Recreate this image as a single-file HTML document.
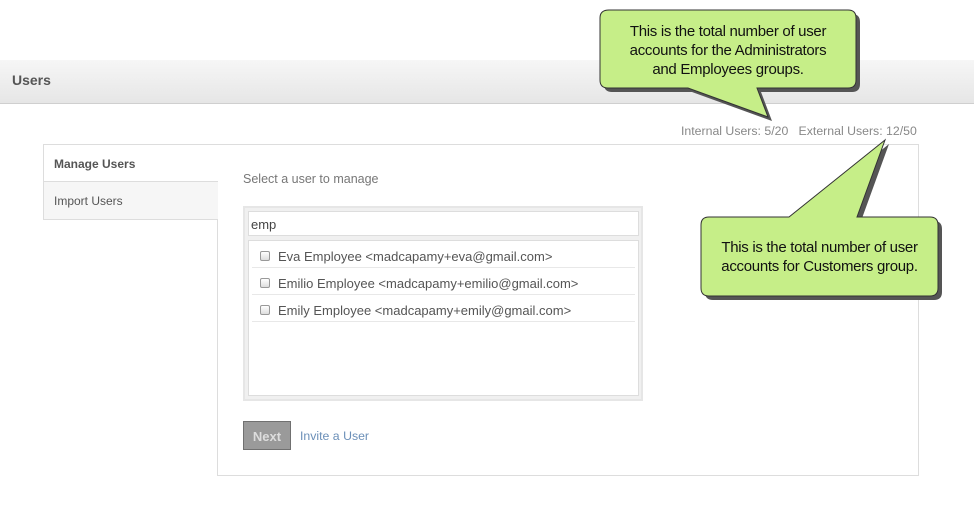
<!DOCTYPE html>
<html><head><style>
body{margin:0;width:974px;height:522px;background:#fff;font-family:"Liberation Sans",Arial,sans-serif;position:relative;overflow:hidden}
.hdr{position:absolute;left:0;top:60px;width:974px;height:43px;background:linear-gradient(#f6f6f6,#e6e6e6);border-bottom:1px solid #cfcfcf}
.hdr span{position:absolute;left:12px;top:12px;font-weight:bold;font-size:14px;color:#555}
.stats{position:absolute;left:681px;top:124px;font-size:12.3px;color:#888}
.nav{position:absolute;left:43px;top:144px;width:174px;height:74px;border:1px solid #ddd;border-right:none}
.nav div{height:36px;line-height:38px;padding-left:10px;font-size:12px;color:#555}
.nav .a{font-weight:bold;background:#fff;border-bottom:1px solid #ddd;width:164px}
.nav .b{background:#f6f6f6;height:37px}
.panel{position:absolute;left:217px;top:144px;width:700px;height:330px;border:1px solid #ddd}
.sel{position:absolute;left:243px;top:172px;font-size:12.5px;color:#777}
.box{position:absolute;left:243px;top:206px;width:396px;height:191px;border:2px solid #e6e6e6;background:#f0f0f0}
.inp{position:absolute;left:3px;top:3px;width:387px;height:23px;border:1px solid #ddd;background:#fff;font-size:13px;color:#444;line-height:25px;padding-left:2px;box-sizing:content-box}
.list{position:absolute;left:3px;top:32px;width:389px;height:154px;border:1px solid #ddd;background:#fff}
.row{margin:0 3px;height:26px;border-bottom:1px solid #e8e8e8;font-size:13px;color:#555;line-height:31px;padding-left:8px}
.cb{display:inline-block;width:8px;height:8px;border:1px solid #999;border-radius:2px;background:linear-gradient(#fff,#ddd);margin-right:8px;vertical-align:0}
.btn{position:absolute;left:243px;top:421px;width:46px;height:27px;background:#9a9a9a;border:1px solid #707070;color:#ddd;font-weight:bold;font-size:13px;text-align:center;line-height:29px}
.inv{position:absolute;left:300px;top:429px;font-size:12.3px;color:#6b8fb8}
svg{position:absolute;left:0;top:0}
.ct{position:absolute;font-size:15px;color:#111;text-align:center;line-height:19px;letter-spacing:-0.3px}
</style></head><body>
<div class="hdr"><span>Users</span></div>
<div class="stats">Internal Users: 5/20&nbsp;&nbsp;&nbsp;External Users: 12/50</div>
<div class="panel"></div>
<div class="nav"><div class="a">Manage Users</div><div class="b">Import Users</div></div>
<div class="sel">Select a user to manage</div>
<div class="box"><div class="inp">emp</div><div class="list">
<div class="row"><span class="cb"></span>Eva Employee &lt;madcapamy+eva@gmail.com&gt;</div>
<div class="row"><span class="cb"></span>Emilio Employee &lt;madcapamy+emilio@gmail.com&gt;</div>
<div class="row"><span class="cb"></span>Emily Employee &lt;madcapamy+emily@gmail.com&gt;</div>
</div></div>
<div class="btn">Next</div>
<div class="inv">Invite a User</div>
<svg width="974" height="522">
<g transform="translate(4,4)" fill="#555">
<path d="M609,10 H848 Q856,10 856,18 V80 Q856,88 848,88 H757 L768,117 L688,88 H608 Q600,88 600,80 V18 Q600,10 609,10Z"/>
<path d="M709,217 H789 L885,140 L857,217 H930 Q938,217 938,225 V288 Q938,296 930,296 H709 Q701,296 701,288 V225 Q701,217 709,217Z"/>
</g>
<g fill="#c6ee88" stroke="#333" stroke-width="1">
<path d="M609,10 H848 Q856,10 856,18 V80 Q856,88 848,88 H757 L768,117 L688,88 H608 Q600,88 600,80 V18 Q600,10 609,10Z"/>
<path d="M709,217 H789 L885,140 L857,217 H930 Q938,217 938,225 V288 Q938,296 930,296 H709 Q701,296 701,288 V225 Q701,217 709,217Z"/>
</g>
</svg>
<div class="ct" style="left:600px;top:22px;width:256px">This is the total number of user<br>accounts for the Administrators<br>and Employees groups.</div>
<div class="ct" style="left:701px;top:238px;width:237px">This is the total number of user<br>accounts for Customers group.</div>
</body></html>
